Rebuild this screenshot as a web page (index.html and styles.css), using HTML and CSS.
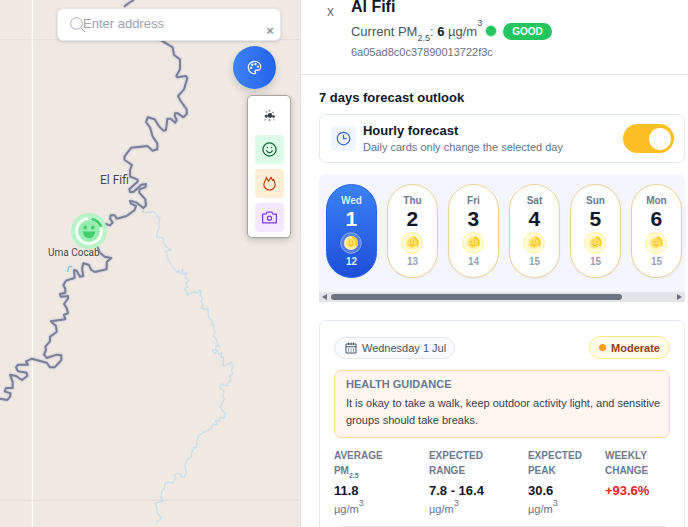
FILE: index.html
```html
<!DOCTYPE html>
<html lang="en">
<head>
  <meta charset="UTF-8">
  <meta name="viewport" content="width=device-width, initial-scale=1.0">
  <title>Air Quality Map</title>
  <link rel="stylesheet" href="styles.css">
</head>
<body>

  <main class="app">
    <section class="map">
      <svg class="map-canvas" viewBox="0 0 900 1581" preserveAspectRatio="xMinYMin slice" aria-hidden="true">
        <path class="grid-line" d="M0 119H900M0 1501H900"/>
        <path class="grid-road" d="M97 0V1581"/>
        <path class="stream" d="M425 635l6-6-2 8 11 1 20-4 10 10 2 8 8 0-4 16 2 14-6 18-2 12 18 0 2 14 8 14 16 10-20 4 8 6-2 12 12 20 8 12 12 14 4-8 6 12 6-14 2 16 10-6-4 14 10 10-8 8 6 10-10 6 6 10 2 10 8-6 14-4 10 2 6-8 4 4-4 12 8 6-4 14 6 10-6 8 12 4 8-2 2 28 10 8-2 12 8 2-2 10 6 10-6 12 8 8 6 18 5 6-10-4-2 14-10 0 8 12 6-12 6 14 8-6-2 14 8 0-2 26 14-4 10-8 8 14-6 8 2 14-8 6 4 14-8 4-2 12-18-6-6 12 12 8-2 20 4 6-6 10-6 12 8 14 8 6-4 14-12-2-4 12-10-2 4 12-12-2-6 14-24 12-14 10-4 14-2 20-8 2-8 18 2 8-12 8-8 14 0 14 4 12-6 12-8 2-4-10-12-2-6 8 4 10-10 12-10-4-12 4-2 14-8 10-2 18 4 12-22 6 6 14 0 16 14 14-18 16"/>
        <path class="stream-pond" d="M203 816l3-14 6-4 5 4"/>
        <g class="river">
          <path d="M372 20L386 9L402 0"/>
          <path d="M440 100L485 122L518 142L522 165L540 178L540 208L529 228L532 232L558 228L562 234L552 268L534 288L540 300L560 328L560 342L550 352L534 340L525 340L524 348L530 360L526 368L512 356L502 356L498 390L490 392L478 380L464 358L443 352L438 366L450 382L458 410L472 430L472 448L458 452L442 438L394 443L373 470L374 480L396 495L390 510L390 530L412 538L414 544L388 568L390 576L400 576L424 554L438 552L436 562L418 568L418 578L436 598L438 616L430 624L410 608L390 602L392 610L408 618L404 630L380 648L350 656L344 646L332 646L330 656L338 668L330 676L318 672L270 690L293 742L300 758L314 770L334 774L320 786L320 808L284 816L274 810L266 794L250 790L246 806L250 828L240 830L230 812L222 810L224 834L198 842L190 856L196 866L196 878L180 882L182 890L204 888L204 896L192 912L200 924L204 940L192 944L196 958L152 964L168 978L170 996L150 1010L150 1024L136 1040L138 1050L132 1064L140 1074L170 1064L184 1066L184 1080L164 1102L150 1102L140 1088L96 1076L78 1084L84 1094L54 1094L48 1102L54 1114L80 1118L82 1128L66 1140L48 1128L30 1124L38 1146L38 1164L18 1164L14 1174L32 1180L30 1190L22 1200L0 1196"/>
        </g>
      </svg>

      <span class="place place-fifi">El Fifi</span>
      <span class="place place-cocab">Uma Cocab</span>

      <button class="marker" aria-label="Al Fifi, good">
        <svg viewBox="0 0 36 36">
          <circle cx="18" cy="18" r="18" fill="#b9f3c8"/>
          <circle cx="18" cy="18" r="12.5" fill="none" stroke="#fff" stroke-width="2.6"/>
          <path d="M17 5.500A12.500 12.500 0 0 1 20.500 5.800" fill="none" stroke="#b9f3c8" stroke-width="3"/>
          <path d="M20.500 5.800A12.500 12.500 0 0 1 30 14" fill="none" stroke="#43cf6d" stroke-width="2.8"/>
          <circle cx="18" cy="18" r="10.4" fill="#9aecb1"/>
          <circle cx="14.200" cy="14.500" r="1.900" fill="#43cf6d"/>
          <circle cx="21.800" cy="14.500" r="1.900" fill="#43cf6d"/>
          <path d="M11.700 18.500h12.600a6.300 6.700 0 0 1-12.600 0z" fill="#43cf6d"/>
        </svg>
      </button>

      <div class="map-overlay">
        <form class="search">
          <svg class="search-icon" viewBox="0 0 16 16"><circle cx="6.500" cy="6.500" r="5.800"/><path d="M10.800 10.800L15 15"/></svg>
          <input type="text" aria-label="Enter address" placeholder="Enter address">
          <button type="reset" class="search-clear" aria-label="Clear">×</button>
        </form>
        <button class="palette-btn" aria-label="Map style">
          <svg viewBox="0 0 24 24">
            <path d="M12 2C6.500 2 2 6.500 2 12s4.500 10 10 10c.93 0 1.650-.75 1.650-1.690 0-.44-.18-.83-.44-1.120-.29-.29-.44-.65-.44-1.130a1.640 1.640 0 0 1 1.670-1.670h2c3.050 0 5.550-2.500 5.550-5.550C22 6 17.500 2 12 2z"/>
            <circle cx="13.500" cy="6.500" r=".9"/><circle cx="17.500" cy="10.500" r=".9"/><circle cx="8.500" cy="7.500" r=".9"/><circle cx="6.500" cy="12.500" r=".9"/>
          </svg>
        </button>
        <div class="layer-menu">
          <button class="layer" aria-label="Clusters">
            <svg class="cluster-icon" viewBox="0 0 24 24">
              <circle cx="13" cy="12" r="4.500"/><circle cx="6" cy="13" r="3"/><circle cx="19.500" cy="14" r="2.500"/>
              <g opacity=".5"><circle cx="12" cy="3.500" r="2"/><circle cx="6.500" cy="5.500" r="1.700"/><circle cx="18.500" cy="6.500" r="1.700"/><circle cx="12" cy="20.500" r="2.200"/><circle cx="4" cy="20" r="1.500"/><circle cx="20" cy="20" r="1.500"/></g>
            </svg>
          </button>
          <button class="layer layer-green" aria-label="Smileys">
            <svg viewBox="0 0 24 24"><circle cx="12" cy="12" r="10.500"/><path d="M7.500 14s1.500 3 4.500 3 4.500-3 4.500-3M8.500 8.500v.5M15.500 8.500v.5"/></svg>
          </button>
          <button class="layer layer-orange" aria-label="Heatmap">
            <svg viewBox="0 0 24 24"><path d="M7 2c.5 3 2.500 4 3.500 6.500C12 6.500 13 4 14.500 2c.5 2 1.500 3.500 2.500 5l1.500-1.500c1.500 3 2.500 5 2.500 8.500a9 8.500 0 0 1-18 0C3 9.500 6.500 7 7 2z"/></svg>
          </button>
          <button class="layer layer-purple" aria-label="Camera">
            <svg viewBox="0 0 24 24"><path d="M8 3.500h8l1.500 3H23v14H1v-14h5.500z"/><circle cx="12" cy="13" r="3.300"/></svg>
          </button>
        </div>
      </div>
    </section>

    <aside class="panel">
      <header class="panel-header">
        <button class="close-btn" aria-label="Close">x</button>
        <div>
          <h1>Al Fifi</h1>
          <div class="current">
            <span>Current PM<sub>2.5</sub>: <strong>6</strong> µg/m<sup>3</sup></span>
            <i class="dot"></i>
            <span class="status">GOOD</span>
          </div>
          <p class="station-id">6a05ad8c0c37890013722f3c</p>
        </div>
      </header>

      <div class="panel-body">
        <h2>7 days forecast outlook</h2>

        <label class="hourly" for="hourly">
          <span class="hourly-icon">
            <svg viewBox="0 0 24 24"><circle cx="12" cy="12" r="10"/><path d="M12 6v6h5"/></svg>
          </span>
          <span class="hourly-text">
            <b>Hourly forecast</b>
            <small>Daily cards only change the selected day</small>
          </span>
          <input type="checkbox" class="switch" id="hourly" checked>
        </label>

        <div class="days">
          <div class="days-list" id="days"></div>
          <div class="scrollbar">
            <i class="arrow arrow-left"></i>
            <div class="track"><div class="thumb"></div></div>
            <i class="arrow arrow-right"></i>
          </div>
        </div>

        <section class="detail">
          <div class="detail-top">
            <span class="date">
              <svg viewBox="0 0 24 24"><path d="M2 4h20v18H2zM2 9.500h20M7 1v5M12 1v5M17 1v5"/><path d="M6 14h2M11 14h2M16 14h2M6 18h2M11 18h2M16 18h2"/></svg>
              Wednesday 1 Jul
            </span>
            <span class="level"><i></i>Moderate</span>
          </div>
          <div class="guidance">
            <h3>HEALTH GUIDANCE</h3>
            <p>It is okay to take a walk, keep outdoor activity light, and sensitive groups should take breaks.</p>
          </div>
          <dl class="stats">
            <div>
              <dt>AVERAGE PM<sub>2.5</sub></dt>
              <dd><b>11.8</b> <span>µg/m<sup>3</sup></span></dd>
            </div>
            <div>
              <dt>EXPECTED RANGE</dt>
              <dd><b>7.8 - 16.4</b> <span>µg/m<sup>3</sup></span></dd>
            </div>
            <div>
              <dt>EXPECTED PEAK</dt>
              <dd><b>30.6</b> <span>µg/m<sup>3</sup></span></dd>
            </div>
            <div>
              <dt>WEEKLY CHANGE</dt>
              <dd><b class="up">+93.6%</b></dd>
            </div>
          </dl>
          <div class="chart"></div>
        </section>
      </div>
    </aside>
  </main>

  <script>
    const days = [
      ['Wed', 1, 12],
      ['Thu', 2, 13],
      ['Fri', 3, 14],
      ['Sat', 4, 15],
      ['Sun', 5, 15],
      ['Mon', 6, 15]
    ];

    const face = `
      <svg viewBox="0 0 22 22">
        <circle class="halo" cx="11" cy="11" r="10.300"/>
        <circle cx="11" cy="11" r="7" fill="#fff3b0"/>
        <circle cx="11" cy="11" r="5" fill="#fde06a"/>
        <path d="M12 5a6 6 0 0 1 4 9" fill="none" stroke="#facc15" stroke-width="2"/>
        <path d="M9.500 9v1.500M12.500 9v1.500M8.500 12.500q2.500 2.500 5 0" fill="none" stroke="#f5b70c" stroke-width="1"/>
      </svg>`;

    document.getElementById('days').innerHTML = days.map(([name, date, value], i) => `
      <button class="day ${i === 0 ? 'active' : ''}">
        <span class="day-name">${name}</span>
        <span class="day-date">${date}</span>
        ${face}
        <span class="day-value">${value}</span>
      </button>`).join('');
  </script>

</body>
</html>
```
FILE: styles.css
```css
* {
  box-sizing: border-box;
}

body {
  margin: 0;
  font-family: "Liberation Sans", Arial, sans-serif;
  color: #0f172a;
  background: #fff;
}

h1, h2, h3, p, dl, dd {
  margin: 0;
}

button {
  font-family: inherit;
  padding: 0;
  border: none;
  cursor: pointer;
}

svg {
  display: block;
}

sub, sup {
  line-height: 0;
}

.app {
  display: flex;
  height: 100vh;
  overflow: hidden;
}

/* map */
.map {
  position: relative;
  flex: 0 0 43.6%;
  background: #efe9e2;
  overflow: hidden;
}

.map-canvas {
  position: absolute;
  width: 100%;
  height: 100%;
}

.map-canvas path {
  fill: none;
  stroke-linejoin: round;
}

.map-canvas .grid-line {
  stroke: #dfddda;
  stroke-width: 3;
}

.map-canvas .grid-road {
  stroke: #fff;
  stroke-width: 3;
}

.map-canvas .stream {
  stroke: #c9dfea;
  stroke-width: 4;
}

.map-canvas .stream-pond {
  stroke: #7cc6ec;
  stroke-width: 4;
}

.river path {
  stroke: #7a7f96;
  stroke-width: 6;
  filter: drop-shadow(0 0 3px #b4b9dc);
}

.place {
  position: absolute;
  font-family: Roboto, sans-serif;
  color: #444;
  text-shadow: 0 0 2px #fff;
  white-space: nowrap;
}

.place-fifi {
  left: 100px;
  top: 172px;
  font-size: 12px;
  line-height: 16px;
}

.place-cocab {
  left: 48px;
  top: 247px;
  font-size: 10px;
  line-height: 12px;
}

.marker {
  position: absolute;
  left: 71px;
  top: 213px;
  width: 36px;
  height: 36px;
  border-radius: 50%;
  background: none;
}

.map-overlay {
  position: relative;
  display: flex;
  flex-direction: column;
  align-items: flex-end;
  padding: 8px 9px 0 57px;
}

.search {
  display: flex;
  align-items: center;
  align-self: stretch;
  height: 33px;
  margin-right: 10px;
  padding: 0 6px 0 12px;
  background: #fff;
  border: 1px solid #e5e7eb;
  border-radius: 6px;
  box-shadow: 0 1px 3px rgba(0, 0, 0, 0.15);
}

.search-icon {
  flex: none;
  width: 16px;
  height: 16px;
  margin-right: -3px;
  fill: none;
  stroke: #a3aab5;
}

.search input {
  flex: 1;
  min-width: 0;
  padding: 0 0 2px;
  border: none;
  outline: none;
  background: none;
  font: 13px "Liberation Sans", Arial, sans-serif;
}

.search input::placeholder {
  color: #9ca3af;
}

.search-clear {
  align-self: flex-end;
  background: none;
  color: #8b95a3;
  font-size: 13px;
  font-weight: bold;
  line-height: 18px;
}

.palette-btn {
  display: grid;
  place-items: center;
  width: 43px;
  height: 43px;
  margin: 5px 15px 6px 0;
  border-radius: 50%;
  background: linear-gradient(to right, #3b82f6, #2563eb);
  box-shadow: 0 4px 8px rgba(0, 0, 0, 0.15);
}

.palette-btn svg {
  width: 15px;
  height: 15px;
  fill: none;
  stroke: #fff;
  stroke-width: 2;
}

.layer-menu {
  display: flex;
  flex-direction: column;
  gap: 5px;
  padding: 5px 6px 5px 7px;
  background: #fff;
  border: 1px solid #aaa59f;
  border-radius: 5px;
  box-shadow: 0 2px 6px rgba(0, 0, 0, 0.2);
}

.layer {
  display: grid;
  place-items: center;
  width: 29px;
  height: 29px;
  border-radius: 4px;
  background: none;
}

.layer svg {
  width: 15px;
  height: 15px;
  fill: none;
  stroke: currentColor;
  stroke-width: 2;
  stroke-linecap: round;
  stroke-linejoin: round;
}

.layer .cluster-icon {
  width: 13px;
  height: 13px;
  fill: #374151;
  stroke: none;
}

.layer-green {
  background: #dcfce7;
  color: #166534;
}

.layer-orange {
  background: #ffedd5;
  color: #c2410c;
}

.layer-purple {
  background: #f3e8ff;
  color: #7e3af2;
}

/* side panel */
.panel {
  flex: 1;
  min-width: 0;
  overflow: hidden;
  border-left: 1px solid #e2e4ea;
}

.panel-header {
  display: flex;
  gap: 16px;
  height: 75px;
  padding-left: 25px;
  border-bottom: 1px solid #e5e7eb;
}

.close-btn {
  align-self: flex-start;
  width: 9px;
  padding-top: 4px;
  background: none;
  color: #6b7280;
  font-size: 14px;
  line-height: 15px;
}

h1 {
  font-size: 16px;
  line-height: 14px;
}

.current {
  display: flex;
  align-items: center;
  height: 18px;
  margin: 8px 0 6px;
  font-size: 13px;
  color: #4b5563;
}

.current strong {
  color: #0f172a;
}

.current sub, .current sup {
  font-size: 9px;
}

.current sup {
  vertical-align: 10px;
}

.current sub {
  vertical-align: -5px;
}

.dot {
  width: 10px;
  height: 10px;
  margin: 0 7px 0 4px;
  border-radius: 50%;
  background: #22c55e;
  box-shadow: 0 0 0 1px #bbf0cc;
}

.status {
  padding: 0 9px;
  border-radius: 9px;
  background: #22c55e;
  color: #fff;
  font-size: 10px;
  font-weight: bold;
  line-height: 17px;
}

.station-id {
  font-size: 11px;
  line-height: 12px;
  color: #6b7280;
}

.panel-body {
  padding: 15px 3px 0 18px;
}

h2 {
  font-size: 13px;
  line-height: 16px;
}

.hourly {
  display: flex;
  align-items: center;
  height: 49px;
  margin: 8px 0 11px;
  padding: 0 10px 0 11px;
  border: 1px solid #e2e8f0;
  border-radius: 7px;
}

.hourly-icon {
  display: grid;
  place-items: center;
  width: 25px;
  height: 25px;
  margin-right: 7px;
  border-radius: 4px;
  background: #eff6ff;
}

.hourly-icon svg {
  width: 15px;
  height: 15px;
  fill: none;
  stroke: #3b63e0;
  stroke-width: 2;
}

.hourly-text {
  flex: 1;
  display: flex;
  flex-direction: column;
}

.hourly-text b {
  font-size: 13px;
  line-height: 18px;
}

.hourly-text small {
  font-size: 11px;
  line-height: 15px;
  color: #64748b;
}

.switch {
  appearance: none;
  display: flex;
  align-items: center;
  justify-content: flex-end;
  width: 51px;
  height: 29px;
  margin: 0;
  padding: 0 3px;
  border-radius: 15px;
  background: #fbbf24;
}

.switch::before {
  content: "";
  width: 22px;
  height: 22px;
  border-radius: 50%;
  background: #fff;
}

/* day cards */
.days {
  border-radius: 7px 7px 0 0;
  background: #f5f6fb;
  overflow: hidden;
}

.days-list {
  display: flex;
  gap: 10px;
  padding: 10px 7px 14px;
}

.day {
  display: flex;
  flex-direction: column;
  align-items: center;
  flex: 0 0 51px;
  height: 94px;
  padding-top: 9px;
  border: 1px solid #ecd092;
  border-radius: 26px;
  background: #fff;
  box-shadow: 0 1px 2px rgba(0, 0, 0, 0.05);
  font-weight: bold;
}

.day-name {
  font-size: 10px;
  line-height: 14px;
  color: #6b7a90;
}

.day-date {
  font-size: 21px;
  line-height: 22px;
  color: #0f172a;
}

.day svg {
  width: 22px;
  height: 22px;
  margin: 2px 0 1px;
}

.halo {
  fill: #fffbdc;
  stroke: #fef08a;
}

.day-value {
  font-size: 10px;
  line-height: 13px;
  color: #94a3b8;
}

.day.active {
  border-color: #2563eb;
  background: linear-gradient(#3b82f6, #1d4ed8);
}

.active .day-name, .active .day-value {
  color: #dbeafe;
}

.active .day-date {
  color: #fff;
}

.active .halo {
  fill: rgba(255, 255, 255, 0.2);
  stroke: rgba(255, 255, 255, 0.4);
}

.scrollbar {
  display: flex;
  align-items: center;
  height: 10px;
  padding: 0 3px;
  background: #e3e4e8;
}

.track {
  flex: 1;
  margin: 0 4px;
}

.thumb {
  width: 85%;
  height: 6px;
  border-radius: 3px;
  background: #6b7280;
}

.arrow {
  border: 3px solid transparent;
}

.arrow-left {
  border-right: 5px solid #6b7280;
  border-left: none;
}

.arrow-right {
  border-left: 5px solid #6b7280;
  border-right: none;
}

/* selected day */
.detail {
  margin-top: 18px;
  padding: 15px 14px;
  border: 1px solid #e2e8f0;
  border-radius: 7px;
}

.detail-top {
  display: flex;
  align-items: center;
  justify-content: space-between;
  margin-bottom: 11px;
}

.date {
  display: flex;
  align-items: center;
  gap: 5px;
  height: 22px;
  padding: 0 8px 0 10px;
  border: 1px solid #e2e8f0;
  border-radius: 11px;
  background: #f8fafc;
  color: #475569;
  font-size: 11px;
}

.date svg {
  width: 12px;
  height: 12px;
  fill: none;
  stroke: #475569;
  stroke-width: 2;
}

.level {
  display: flex;
  align-items: center;
  gap: 5px;
  height: 23px;
  padding: 0 9px;
  border: 1px solid #fde68a;
  border-radius: 12px;
  background: #fffbeb;
  color: #92400e;
  font-size: 11px;
  font-weight: bold;
}

.level i {
  width: 7px;
  height: 7px;
  border-radius: 50%;
  background: #f59e0b;
}

.guidance {
  padding: 6px 5px 8px 11px;
  border: 1px solid #fcd9a0;
  border-radius: 7px;
  background: #fff7ed;
}

.guidance h3 {
  font-size: 11px;
  line-height: 15px;
  color: #6b7a90;
}

.guidance p {
  margin-top: 3px;
  font-size: 11px;
  line-height: 17px;
  color: #334155;
}

.stats {
  display: grid;
  grid-template-columns: 83px 87px 65px 1fr;
  column-gap: 12px;
  margin-top: 10px;
}

.stats dt {
  width: min-content;
  font-size: 10px;
  font-weight: bold;
  line-height: 15px;
  color: #6b7a90;
}

.stats sub {
  font-size: 7px;
  vertical-align: -4px;
}

.stats dd {
  display: flex;
  flex-direction: column;
  margin-top: 4px;
  font-size: 11px;
  line-height: 18px;
  color: #64748b;
}

.stats b {
  font-size: 13px;
  color: #0f172a;
}

.stats sup {
  font-size: 9px;
  vertical-align: 7px;
}

.stats .up {
  color: #dc2626;
}

.chart {
  height: 120px;
  margin-top: 8px;
  border: 1px solid #e2e8f0;
  border-radius: 7px;
}
```
